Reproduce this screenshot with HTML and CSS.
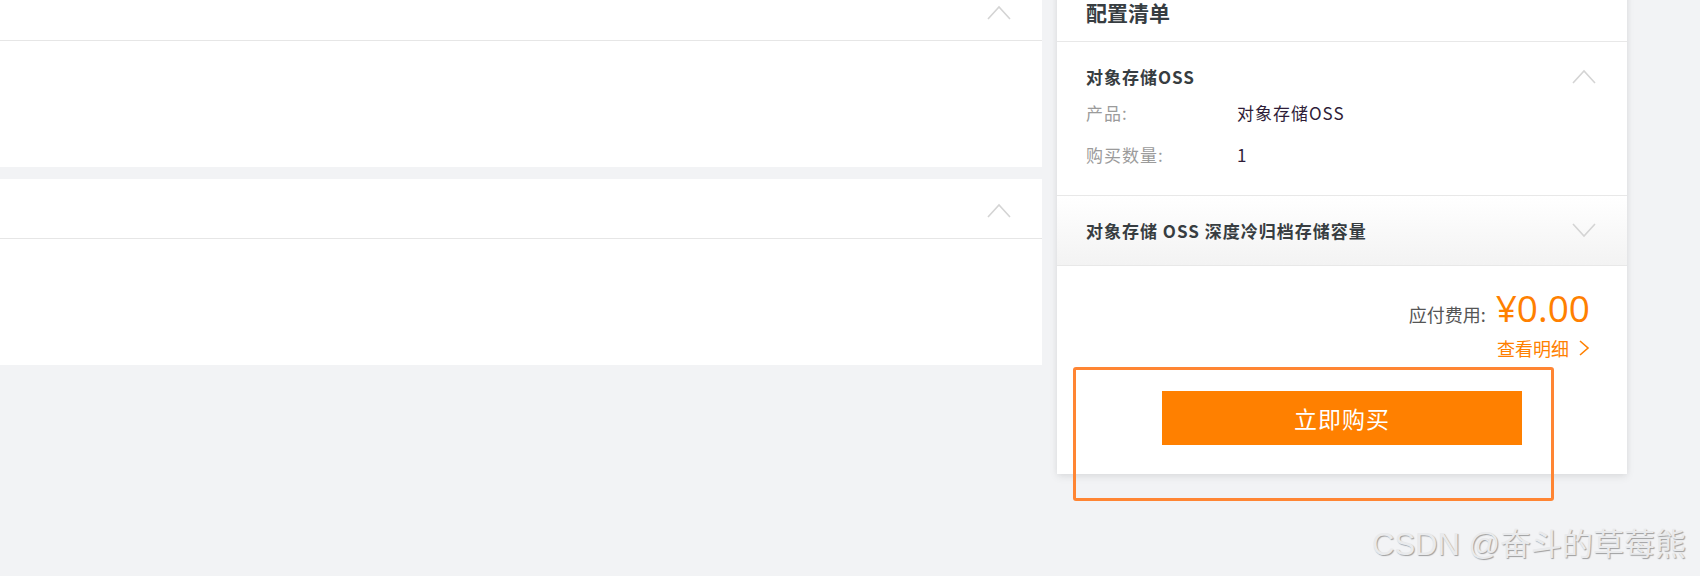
FILE: index.html
```html
<!DOCTYPE html>
<html lang="zh-CN">
<head>
<meta charset="utf-8">
<title>配置清单</title>
<link rel="stylesheet" href="styles.css">
</head>
<body>
<div class="page">
  <div class="main">
    <section class="card">
      <div class="card-head">
        <svg class="chev" width="24" height="15" viewBox="0 0 24 15"><polyline points="1,14 12,2 23,14"/></svg>
      </div>
      <div class="card-body"></div>
    </section>
    <section class="card">
      <div class="card-head">
        <svg class="chev" width="24" height="15" viewBox="0 0 24 15"><polyline points="1,14 12,2 23,14"/></svg>
      </div>
      <div class="card-body"></div>
    </section>
  </div>
  <aside class="summary">
    <div class="panel">
      <div class="panel-head">配置清单</div>
      <div class="group">
        <div class="group-head">
          <span>对象存储OSS</span>
          <svg class="chev" width="24" height="15" viewBox="0 0 24 15"><polyline points="1,14 12,2 23,14"/></svg>
        </div>
        <div class="rows">
          <div class="row"><span class="label">产品:</span><span class="value">对象存储OSS</span></div>
          <div class="row"><span class="label">购买数量:</span><span class="value">1</span></div>
        </div>
      </div>
      <div class="group collapsed">
        <div class="group-head">
          <span>对象存储 OSS 深度冷归档存储容量</span>
          <svg class="chev" width="24" height="15" viewBox="0 0 24 15"><polyline points="1,1 12,13 23,1"/></svg>
        </div>
      </div>
      <div class="footer">
        <div class="price"><span class="price-label">应付费用:</span><span class="amount">¥0.00</span></div>
        <a class="detail">查看明细<svg width="12" height="16" viewBox="0 0 12 16"><polyline points="2,1 10,8 2,15"/></svg></a>
        <button class="buy">立即购买</button>
      </div>
    </div>
    <div class="highlight"></div>
  </aside>
</div>
<div class="watermark">CSDN @奋斗的草莓熊</div>
</body>
</html>
```
FILE: styles.css
```css
html, body {
  margin: 0;
  padding: 0;
}
body {
  width: 1700px;
  height: 576px;
  overflow: hidden;
  background: #f2f3f5;
  font-family: "Noto Sans CJK SC", "Noto Sans", sans-serif;
  position: relative;
}
.page {
  display: flex;
  gap: 15px;
  margin-top: -19px;
  align-items: flex-start;
}
.main {
  width: 1042px;
  display: flex;
  flex-direction: column;
  gap: 12px;
}
.card {
  background: #fff;
}
.card-head {
  height: 60px;
  box-sizing: border-box;
  padding-top: 3px;
  padding-right: 31px;
  border-bottom: 1px solid #e6e6e6;
  display: flex;
  justify-content: flex-end;
  align-items: center;
}
.card-body {
  height: 126px;
}
.chev {
  display: block;
}
.chev polyline {
  fill: none;
  stroke: #d4d4d4;
  stroke-width: 1.6;
}
.summary {
  width: 570px;
  position: relative;
}
.panel {
  background: #fff;
  box-shadow: 0 3px 8px rgba(0, 0, 0, 0.08), 0 0 6px rgba(0, 0, 0, 0.04);
}
.panel-head {
  height: 61px;
  box-sizing: border-box;
  border-bottom: 1px solid #e8e8e8;
  padding: 22px 29px 0;
  font-size: 21px;
  font-weight: bold;
  color: #373d41;
  line-height: 18px;
}
.group {
  border-bottom: 1px solid #e8e8e8;
  padding: 22px 31px 20px 29px;
}
.group.collapsed {
  padding-bottom: 23px;
  background: linear-gradient(to bottom, #ffffff, #f3f3f3);
}
.group-head {
  display: flex;
  justify-content: space-between;
  align-items: center;
  height: 24px;
  font-size: 17px;
  letter-spacing: 1px;
  font-weight: bold;
  color: #373d41;
}
.rows {
  margin-top: 3px;
}
.row {
  display: flex;
  height: 42px;
  align-items: center;
  font-size: 17px;
  letter-spacing: 1px;
}
.label {
  width: 151px;
  color: #9b9b9b;
}
.value {
  color: #2f1d38;
}
.footer {
  padding: 22px 29px 29px 29px;
  display: flex;
  flex-direction: column;
  align-items: flex-end;
}
.price {
  display: flex;
  align-items: baseline;
  height: 40px;
  line-height: 40px;
  margin-right: 8px;
}
.price-label {
  font-size: 18px;
  color: #555;
  margin-right: 10px;
}
.amount {
  font-family: "Open Sans", "Noto Sans", sans-serif;
  font-size: 37px;
  color: #ff8000;
}
.detail {
  margin-top: 8px;
  margin-right: 8px;
  height: 24px;
  display: flex;
  align-items: center;
  gap: 9px;
  font-size: 18px;
  color: #ff8000;
}
.detail polyline {
  fill: none;
  stroke: #ff8000;
  stroke-width: 1.6;
}
.buy {
  align-self: center;
  margin: 31px 0 0 0;
  width: 360px;
  height: 54px;
  border: 0;
  background: #ff8000;
  color: #fff;
  font-family: "Noto Sans CJK SC", sans-serif;
  font-size: 23px;
  letter-spacing: 1px;
  padding: 0;
  cursor: pointer;
}
.highlight {
  position: absolute;
  left: 16px;
  top: 386px;
  width: 481px;
  height: 134px;
  box-sizing: border-box;
  border: 3px solid #ff8533;
  border-radius: 3px;
}
.watermark {
  position: absolute;
  left: 1372px;
  top: 525px;
  font-family: "Liberation Sans", "Noto Sans CJK SC", sans-serif;
  font-size: 31px;
  line-height: 40px;
  color: #e9eaec;
  text-shadow: 1px 1px 1px rgba(0, 0, 0, 0.35);
  white-space: nowrap;
}
```
